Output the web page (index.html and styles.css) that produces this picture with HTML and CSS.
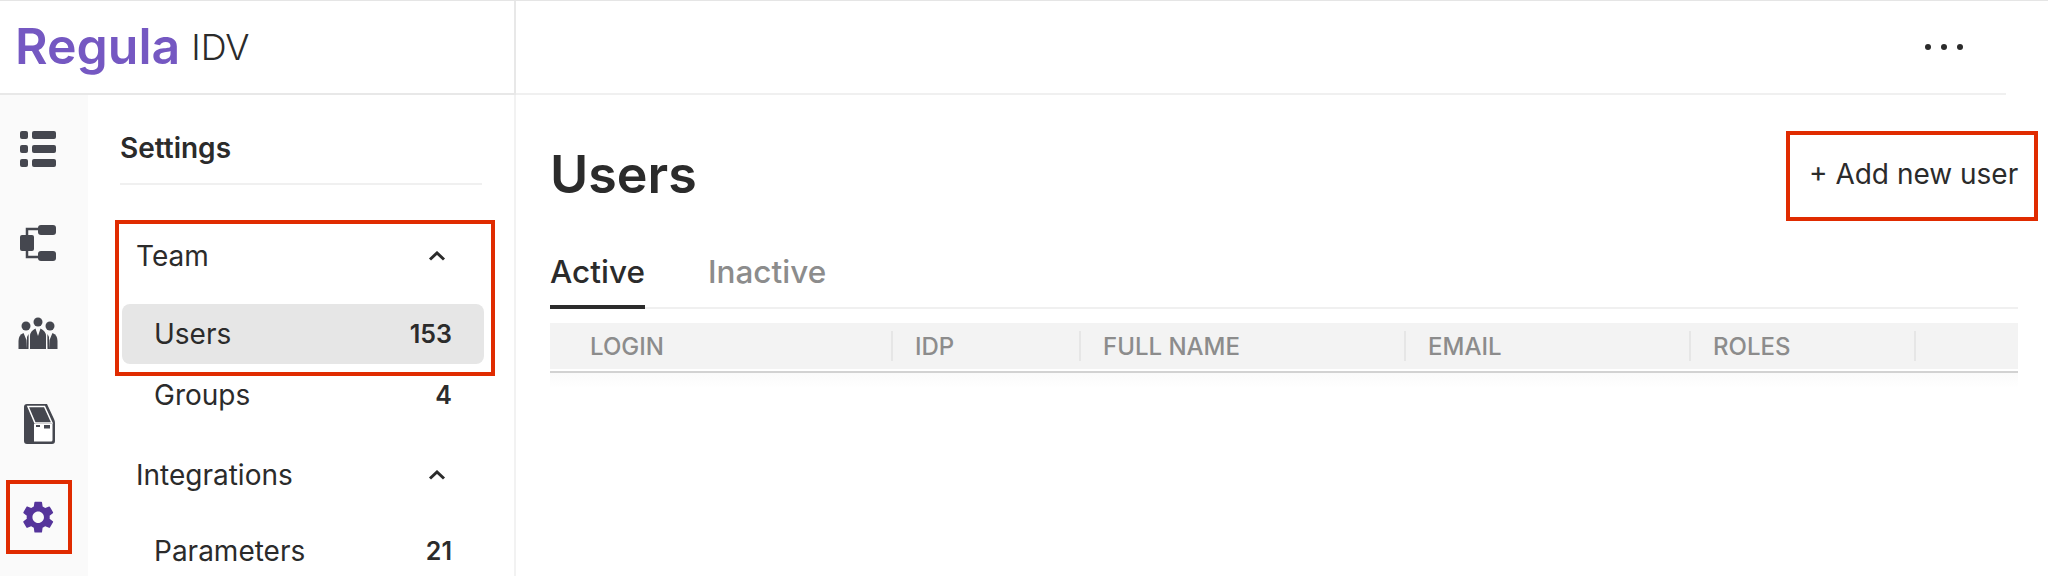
FILE: index.html
```html
<!DOCTYPE html>
<html lang="en">
  <head>
    <meta charset="UTF-8" />
    <title>Regula IDV - Users</title>
    <link rel="stylesheet" href="styles.css">
  </head>
  <body>
    <header class="topbar">
      <div class="brand">
        <span class="brand-logo">Regula</span>
        <span class="brand-name">IDV</span>
      </div>
      <div class="topbar-actions">
        <div class="dots"><i></i><i></i><i></i></div>
      </div>
    </header>

    <div class="layout">
      <nav class="rail">
        <svg class="rail-icon icon-list" viewBox="0 0 40 40">
          <rect x="2" y="2" width="8" height="8" rx="2" />
          <rect x="14" y="2" width="24" height="8" rx="2" />
          <rect x="2" y="16" width="8" height="8" rx="2" />
          <rect x="14" y="16" width="24" height="8" rx="2" />
          <rect x="2" y="30" width="8" height="8" rx="2" />
          <rect x="14" y="30" width="24" height="8" rx="2" />
        </svg>
        <svg class="rail-icon icon-flow" viewBox="0 0 40 40">
          <path d="M9 12V6H21M9 28V34H21" fill="none" stroke="#45474f" stroke-width="2.5" />
          <rect x="2" y="12" width="14" height="16" rx="2" />
          <rect x="20" y="2" width="18" height="10" rx="3" />
          <rect x="20" y="28" width="18" height="10" rx="3" />
        </svg>
        <svg class="rail-icon icon-team" viewBox="0 0 40 40">
          <circle cx="20" cy="9" r="4.5" />
          <circle cx="8" cy="13" r="4.5" />
          <circle cx="32" cy="13" r="4.5" />
          <path d="M12 36V23Q12 18 17.500 15.500L20 23 22.500 15.500Q28 18 28 23V36Z" />
          <path d="M0 36V28Q0 22 5 20L8 27 8.500 36Z" transform="translate(0.500)" />
          <path d="M9 24L10.500 21Q10.800 24.500 10.500 36H9Z" />
          <path d="M40 36V28Q40 22 35 20L32 27 31.500 36Z" transform="translate(-0.500)" />
          <path d="M31 24L29.500 21Q29.200 24.500 29.500 36H31Z" />
        </svg>
        <svg class="rail-icon icon-kiosk" viewBox="0 0 40 40">
          <path d="M9 0H29L36 15Q37 17 37 19V37Q37 40 34 40H9Q6 40 6 37V3Q6 0 9 0Z" />
          <path d="M10 2.500H26.500L34 19H17Z" fill="none" stroke="#fff" stroke-width="1.500" />
          <path d="M16 20H34.500V36Q34.500 37.500 33 37.500H16Z" fill="#fff" />
          <rect x="18" y="21" width="4" height="2" />
          <rect x="26" y="21" width="6" height="3.500" />
        </svg>
        <div class="rail-active">
          <svg class="gear" viewBox="0 0 24 24">
            <path d="M19.14 12.94c.04-.3.06-.61.06-.94 0-.32-.02-.64-.07-.94l2.03-1.58a.49.49 0 0 0 .12-.61l-1.92-3.32a.488.488 0 0 0-.59-.22l-2.39.96c-.5-.38-1.03-.7-1.62-.94l-.36-2.54a.484.484 0 0 0-.48-.41h-3.84c-.24 0-.43.17-.47.41l-.36 2.54c-.59.24-1.13.57-1.62.94l-2.39-.96c-.22-.08-.47 0-.59.22L2.74 8.87c-.12.21-.08.47.12.61l2.03 1.58c-.05.3-.09.63-.09.94s.02.64.07.94l-2.03 1.58a.49.49 0 0 0-.12.61l1.92 3.32c.12.22.37.29.59.22l2.39-.96c.5.38 1.03.7 1.62.94l.36 2.54c.05.24.24.41.48.41h3.84c.24 0 .44-.17.47-.41l.36-2.54c.59-.24 1.13-.56 1.62-.94l2.39.96c.22.08.47 0 .59-.22l1.92-3.32c.12-.22.07-.47-.12-.61l-2.01-1.58zM12 15.6c-1.98 0-3.6-1.62-3.6-3.6s1.62-3.6 3.6-3.6 3.6 1.62 3.6 3.6-1.62 3.6-3.6 3.6z" />
          </svg>
        </div>
      </nav>

      <aside class="panel">
        <h2 class="panel-title">Settings</h2>
        <div class="nav-group nav-group-marked">
          <div class="nav-head">
            <span>Team</span>
            <svg class="chevron" viewBox="0 0 18 10"><path d="M2 8.500L9 2L16 8.500" /></svg>
          </div>
          <div class="nav-item nav-item-active"><span>Users</span><b>153</b></div>
        </div>
        <div class="nav-item nav-item-groups"><span>Groups</span><b>4</b></div>
        <div class="nav-head nav-head-second">
          <span>Integrations</span>
          <svg class="chevron" viewBox="0 0 18 10"><path d="M2 8.500L9 2L16 8.500" /></svg>
        </div>
        <div class="nav-item nav-item-params"><span>Parameters</span><b>21</b></div>
      </aside>

      <main class="content">
        <div class="content-head">
          <h1 class="page-title">Users</h1>
          <button class="add-btn">+ Add new user</button>
        </div>
        <div class="tabs">
          <span class="tab tab-active">Active</span>
          <span class="tab">Inactive</span>
        </div>
        <div class="table-head">
          <div class="col col-login">LOGIN</div>
          <div class="col col-idp">IDP</div>
          <div class="col col-name">FULL NAME</div>
          <div class="col col-email">EMAIL</div>
          <div class="col col-roles">ROLES</div>
        </div>
        <div class="table-shade"></div>
      </main>
    </div>
  </body>
</html>
```

FILE: styles.css
```css
* {
  box-sizing: border-box;
}
html,
body {
  margin: 0;
  height: 576px;
  overflow: hidden;
}
body {
  font-family: "Inter", sans-serif;
  color: #2b2b2b;
  background: white;
  border-top: 1px solid #e5e5e5;
}
.topbar {
  display: flex;
  height: 94px;
}
.brand {
  width: 516px;
  display: flex;
  align-items: center;
  padding-left: 15px;
  border-right: 2px solid #e8e8e8;
  border-bottom: 2px solid #e8e8e8;
}
.brand-logo {
  font-size: 50px;
  font-weight: 600;
  color: #7558c2;
  margin-top: -3px;
}
.brand-name {
  font-size: 36px;
  font-weight: 300;
  margin-left: 11px;
}
.topbar-actions {
  width: 1490px;
  display: flex;
  justify-content: flex-end;
  align-items: center;
  padding-right: 43px;
  border-bottom: 2px solid #f0f0f0;
}
.dots {
  display: flex;
  gap: 10px;
}
.dots i {
  width: 6px;
  height: 6px;
  border-radius: 50%;
  background: #2b2b2b;
}
.layout {
  display: flex;
  height: 481px;
}
.rail {
  width: 88px;
  flex: none;
  background: #fafafa;
  padding: 34px 0 0 18px;
}
.rail-icon {
  display: block;
  width: 40px;
  height: 40px;
  fill: #45474f;
}
.icon-flow {
  margin-top: 54px;
}
.icon-team {
  margin-top: 50px;
}
.icon-kiosk {
  margin-top: 51px;
}
.rail-active {
  width: 66px;
  height: 74px;
  margin: 36px 0 0 -12px;
  border: 4px solid #e02b00;
  display: flex;
  align-items: center;
  justify-content: center;
}
.gear {
  width: 38.4px;
  height: 38.4px;
  fill: #55349b;
  margin-left: -2px;
}
.panel {
  width: 428px;
  flex: none;
  border-right: 2px solid #f2f2f2;
  padding: 0 30px 0 34px;
}
.panel-title {
  margin: 0 0 0 -2px;
  height: 90px;
  width: 362px;
  display: flex;
  align-items: center;
  padding-top: 18px;
  font-size: 28px;
  font-weight: 600;
  border-bottom: 2px solid #f0f0f0;
}
.nav-group-marked {
  position: relative;
  margin-top: 41px;
}
/* red annotation frame drawn over the Team group */
.nav-group-marked::after {
  content: "";
  position: absolute;
  top: -6px;
  bottom: -12px;
  left: -7px;
  right: -11px;
  border: 4px solid #e02b00;
}
.nav-head {
  display: flex;
  justify-content: space-between;
  align-items: center;
  height: 60px;
  padding: 0 38px 0 14px;
  font-size: 28px;
}
.chevron {
  width: 18px;
  height: 10px;
  fill: none;
  stroke: #2b2b2b;
  stroke-width: 3;
}
.nav-head-second {
  margin-top: 20px;
}
.nav-item {
  display: flex;
  justify-content: space-between;
  align-items: center;
  height: 60px;
  padding: 0 32px 0 32px;
  border-radius: 8px;
  font-size: 28px;
}
.nav-item b {
  font-size: 25px;
  font-weight: 600;
}
.nav-item-active {
  margin-top: 18px;
  background: #e6e6e6;
}
.nav-item-groups {
  margin-top: 1px;
}
.nav-item-params {
  margin-top: 16px;
}
.content {
  flex: 1;
  padding: 0 30px 0 34px;
}
.content-head {
  display: flex;
  justify-content: space-between;
  align-items: center;
  padding-top: 36px;
}
.page-title {
  margin: 0 0 4px;
  font-size: 52px;
  font-weight: 600;
}
.add-btn {
  width: 252px;
  height: 90px;
  margin-right: -20px;
  padding: 0 14px 4px 19px;
  border: 4px solid #e02b00;
  background: none;
  font-family: inherit;
  font-size: 28px;
  color: #2b2b2b;
  text-align: left;
  white-space: nowrap;
}
.tabs {
  display: flex;
  gap: 63px;
  height: 88px;
  padding-top: 32px;
  border-bottom: 2px solid #f0f0f0;
}
.tab {
  height: 56px;
  font-size: 31.500px;
  font-weight: 500;
  line-height: 38px;
  color: #8c8c8c;
}
.tab-active {
  color: #2b2b2b;
  border-bottom: 4px solid #2b2b2b;
  border-radius: 4px 4px 0 0;
}
.table-head {
  display: flex;
  align-items: center;
  height: 46px;
  margin-top: 14px;
  background: #f3f3f3;
  font-size: 24px;
  font-weight: 500;
  color: #8c8c8c;
}
.col {
  height: 30px;
  line-height: 32px;
  padding-left: 22px;
  border-right: 2px solid #e6e6e6;
  white-space: nowrap;
}
.col-login {
  width: 343px;
  padding-left: 40px;
}
.col-idp {
  width: 188px;
}
.col-name {
  width: 325px;
}
.col-email {
  width: 285px;
}
.col-roles {
  width: 225px;
}
.table-shade {
  height: 17px;
  margin-top: 2px;
  border-top: 2px solid #d2d2d2;
  background: linear-gradient(#fafafa, white);
}
```
